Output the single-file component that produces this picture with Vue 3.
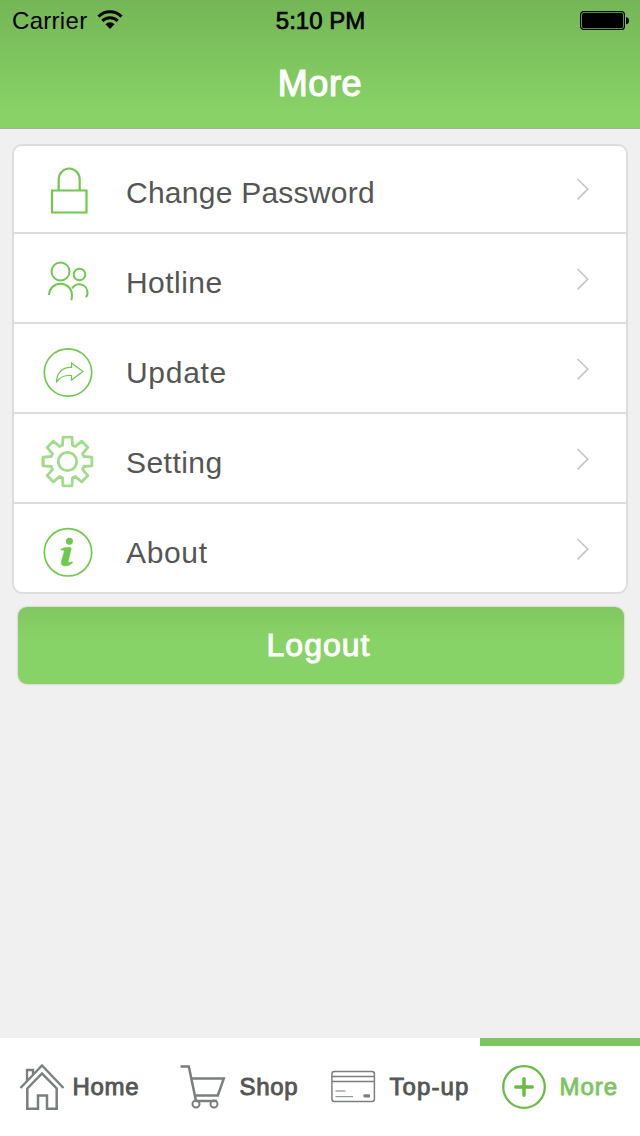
<script setup>
const rows = [
  { id: 'lock', label: 'Change Password' },
  { id: 'people', label: 'Hotline' },
  { id: 'update', label: 'Update' },
  { id: 'gear', label: 'Setting' },
  { id: 'about', label: 'About' },
]
const tabs = [
  { id: 'home', label: 'Home' },
  { id: 'shop', label: 'Shop' },
  { id: 'topup', label: 'Top-up' },
  { id: 'more', label: 'More', active: true },
]

// Outline of an eight-tooth gear centred on (27.5, 47.5)
const gear = (() => {
  const pts = []
  for (let i = 0; i < 8; i++) {
    const a = (i * Math.PI) / 4
    for (const [r, d] of [[17, -0.3], [24.8, -0.18], [24.8, 0.18], [17, 0.3]]) {
      pts.push(`${(27.5 + r * Math.cos(a + d)).toFixed(2)} ${(47.5 + r * Math.sin(a + d)).toFixed(2)}`)
    }
  }
  return `M${pts.join('L')}Z`
})()
</script>

<template>
  <div class="screen">
    <header class="header">
      <div class="status">
        <div class="carrier">
          <span>Carrier</span>
          <svg class="wifi" width="26" height="20" viewBox="0 0 26 20">
            <path d="M1.5 6.6a16.3 16.3 0 0 1 23 0M5.3 10.9a10.8 10.8 0 0 1 15.4 0" fill="none" stroke="#000" stroke-width="3" />
            <path d="M8.5 14.3a6.2 6.2 0 0 1 9 0L13 19Z" />
          </svg>
        </div>
        <span class="clock">5:10 PM</span>
        <svg class="battery" width="50" height="20" viewBox="0 0 50 20">
          <rect x=".6" y=".6" width="43.8" height="17.8" rx="3" fill="none" stroke="#000" stroke-width="1.2" />
          <rect x="2" y="2" width="41" height="15" rx="1.5" />
          <path d="M46 6.2c4 0 4 7 0 7Z" />
        </svg>
      </div>
      <h1>More</h1>
    </header>

    <main class="content">
      <ul class="menu">
        <li v-for="row in rows" :key="row.id">
          <svg class="icon" width="56" height="88" viewBox="0 0 56 88" fill="none" stroke="#70c84e" stroke-width="2">
            <template v-if="row.id === 'lock'">
              <path d="M12 46.5h34.5v22H12ZM18.7 46.5V35.5a10.5 11 0 0 1 21 0v11" stroke-width="2.2" />
            </template>
            <template v-else-if="row.id === 'people'">
              <circle cx="20.5" cy="37.5" r="9" />
              <circle cx="39.5" cy="40.5" r="5.8" />
              <path d="M9 61a11.5 11.2 0 0 1 23 0c0 2-.1 3.5-.7 5.300M32 54.500a8.300 8.300 0 0 1 15.500 4.500c0 2-.3 3.500-2 4" />
            </template>
            <template v-else-if="row.id === 'update'">
              <circle cx="28" cy="48.5" r="23.7" stroke-width="1.7" />
              <path d="M16.5 58c0-8 5-15 15-14.5V39L43 47.5 31.5 56V51.5c-7-.5-11 1-15 6.5Z" stroke-width="1.2" />
            </template>
            <template v-else-if="row.id === 'gear'">
              <g class="cog">
                <path :d="gear" stroke-linejoin="round" />
                <circle cx="27.5" cy="47.5" r="9.2" />
                <path d="M3 43.8v7.5" />
              </g>
            </template>
            <template v-else>
              <circle cx="28" cy="48.3" r="23.7" stroke-width="1.7" />
              <circle cx="29.4" cy="37.2" r="3.5" fill="#70c84e" stroke="none" />
              <path d="M20.8 45.2c3.2-1.5 6-2.2 9.4-1.8.9.1 1.3.6 1.1 1.3l-3 12.1c-.5 2 .8 2.2 3.8.9l.7.8c-2.5 2.5-5 3.6-7.8 3.5-3.7-.1-4.2-2.4-3.4-5.4l2.4-8.4c.5-2-.3-2.5-3-2Z" fill="#70c84e" stroke-width=".5" />
            </template>
          </svg>
          <span :class="['label', row.id]">{{ row.label }}</span>
          <svg class="chevron" width="14" height="24" viewBox="0 0 14 24">
            <path d="M1.5 2 11.8 12.2 1.5 22.3" fill="none" stroke="#c7c7cc" stroke-width="1.7" />
          </svg>
        </li>
      </ul>
      <button class="logout" type="button">Logout</button>
    </main>

    <nav class="tabs">
      <a v-for="tab in tabs" :key="tab.id" :class="['tab', tab.id, { active: tab.active }]">
        <svg width="48" height="48" viewBox="0 0 48 48" fill="none" stroke="#7b7f7c" stroke-width="2">
          <template v-if="tab.id === 'home'">
            <path d="M2.5 26 24 3.5 45.5 26M9 19V8h6V12" stroke-width="2.3" />
            <path d="M9.3 26.5 24 11.5 38.7 26.5V46.7H29V33.5h-9v13.2H9.3Z" stroke-width="2.5" />
          </template>
          <template v-else-if="tab.id === 'shop'">
            <path d="M1.5 4.5h8.3L17 39h21M12.7 16.5H44.8L38.8 33.5h-23" stroke-width="2.5" />
            <circle cx="17" cy="42" r="3.5" /><circle cx="35" cy="42" r="3.5" />
          </template>
          <template v-else-if="tab.id === 'topup'">
            <rect x="2.9" y="9.6" width="42.5" height="30" rx="2.5" stroke-width="1.5" />
            <path d="M3 14.5h42M3 19.5h42" stroke-width="1.3" />
            <path d="M6.5 29h10M6.5 34.7h17.5" stroke-width="1" />
            <rect x="34.5" y="32.2" width="6.5" height="3.2" rx="1" fill="#7b7f7c" stroke="none" />
          </template>
          <template v-else>
            <circle cx="24" cy="25" r="20.8" stroke="#69bd45" stroke-width="2.3" />
            <path d="M24 16.8v16.4M15.8 25h16.4" stroke="#69bd45" stroke-width="3.5" stroke-linecap="round" />
          </template>
        </svg>
        <span>{{ tab.label }}</span>
      </a>
    </nav>
  </div>
</template>

<style>
body { margin: 0; background: #f0f0f0; }
</style>

<style scoped>
.screen {
  display: flex;
  flex-direction: column;
  width: 640px;
  height: 1136px;
  background: #f0f0f0;
  font-family: "Liberation Sans", Arial, sans-serif;
}
.header {
  box-sizing: border-box;
  height: 129px;
  border-bottom: 1px solid #a8aaa6;
  background: linear-gradient(#74b656, #88d267 88%);
}
.status {
  display: grid;
  grid-template-columns: 1fr auto 1fr;
  height: 40px;
  padding: 0 11px 0 12px;
  font-size: 24px;
  line-height: 42px;
}
.carrier { display: flex; letter-spacing: .3px; }
.wifi { margin: 10px 0 0 10px; }
.clock { -webkit-text-stroke: .7px #000; }
.battery { justify-self: end; margin: 11px -1px 0 0; }
h1 {
  margin: 0;
  text-align: center;
  color: #fff;
  font-size: 36px;
  font-weight: 400;
  line-height: 88px;
  letter-spacing: .6px;
  -webkit-text-stroke: 1.2px #fff;
}
.content { flex: 1; padding: 15px 12px 0; }
.menu {
  box-sizing: border-box;
  height: 450px;
  margin: 0;
  padding: 0;
  overflow: hidden;
  list-style: none;
  background: #fff;
  border: 2px solid #ddd;
  border-radius: 10px;
}
.menu li {
  display: flex;
  height: 88px;
  padding: 0 36px 0 26px;
  border-bottom: 2px solid #ddd;
}
.menu li:first-child { margin-top: -2px; }
.menu li:last-child { border-bottom: 0; }
.icon { flex: none; }
.cog { opacity: .65; stroke-width: 2.8px; }
.label {
  flex: 1;
  margin-left: 30px;
  color: #555;
  font-size: 30px;
  line-height: 97px;
  letter-spacing: .45px;
}
.label.lock { letter-spacing: .25px; }
.label.update { letter-spacing: .7px; }
.label.about { letter-spacing: .65px; }
.chevron { margin-top: 33px; }
.logout {
  display: block;
  width: 606px;
  height: 77px;
  margin: 13px 0 0 6px;
  padding: 0 5px 1px 0;
  border: 0;
  border-radius: 9px;
  background: linear-gradient(#80c760, #88d367 45%);
  box-shadow: 0 0 2px rgba(0, 0, 0, .3);
  color: #fff;
  font-family: inherit;
  font-size: 32px;
  letter-spacing: 1px;
  -webkit-text-stroke: 1px #fff;
}
.tabs {
  display: grid;
  grid-template-columns: repeat(4, 160px);
  height: 98px;
  background: #fff;
}
.tab {
  box-sizing: border-box;
  display: flex;
  height: 98px;
  padding: 16px 0 0 18px;
  border-top: 8px solid #fff;
  color: #555;
  font-size: 24px;
  line-height: 50px;
  letter-spacing: .7px;
  -webkit-text-stroke: .9px currentColor;
}
.tab svg { flex: none; -webkit-text-stroke: 0; }
.tab span { margin-left: 6.5px; }
.shop { padding-left: 19px; }
.shop span { margin-left: 12.5px; }
.topup { padding-left: 9px; letter-spacing: 1.1px; }
.topup span { margin-left: 12.5px; }
.more { padding-left: 20px; }
.more span { margin-left: 11.5px; }
.tab.active { border-top-color: #7dc560; color: #7dc560; letter-spacing: 1px; }
</style>
